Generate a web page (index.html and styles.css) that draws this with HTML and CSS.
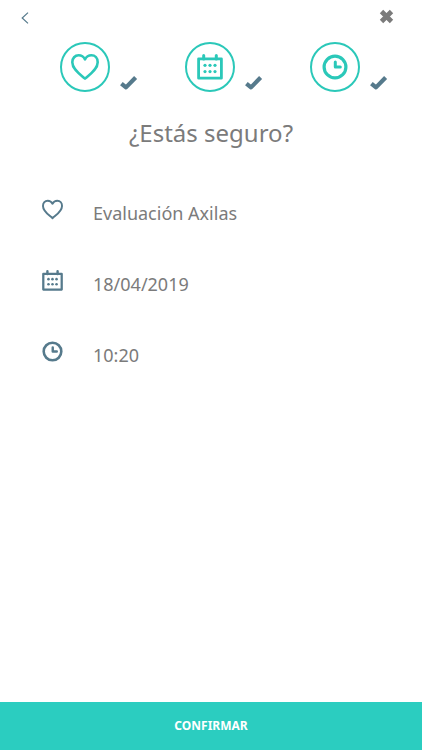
FILE: index.html
```html
<!DOCTYPE html>
<html lang="es">
<head>
<meta charset="utf-8">
<meta name="viewport" content="width=device-width, initial-scale=1">
<title>Confirmar cita</title>
<link rel="stylesheet" href="styles.css">
</head>
<body>
<svg class="symbols" aria-hidden="true">
  <symbol id="heart" viewBox="0 0 28 26">
    <path d="M14 24.600C9.500 20.500 1.300 15.500 1.300 8.200C1.300 4.200 4 1.300 7.600 1.300C10.500 1.300 12.700 2.800 14 5.300C15.300 2.800 17.500 1.300 20.400 1.300C24 1.300 26.700 4.200 26.700 8.200C26.700 15.500 18.500 20.500 14 24.600Z" fill="none" stroke="currentColor" stroke-width="2.600" stroke-linejoin="round"/>
  </symbol>
  <symbol id="calendar" viewBox="0 0 26 26">
    <path d="M1.600 4.800H24.400V24.200H1.600Z" fill="none" stroke="currentColor" stroke-width="2.800" stroke-linejoin="round"/>
    <path d="M6.700 1.500V5M19.300 1.500V5" fill="none" stroke="currentColor" stroke-width="3" stroke-linecap="round"/>
    <g fill="currentColor">
      <circle cx="8" cy="11.300" r="1.600"/><circle cx="13" cy="11.300" r="1.600"/><circle cx="18" cy="11.300" r="1.600"/>
      <circle cx="8" cy="17.600" r="1.600"/><circle cx="13" cy="17.600" r="1.600"/><circle cx="18" cy="17.600" r="1.600"/>
    </g>
  </symbol>
  <symbol id="clock" viewBox="0 0 26 26">
    <circle cx="13" cy="13" r="10.900" fill="none" stroke="currentColor" stroke-width="3.200"/>
    <path d="M13.300 8V13H18.300" fill="none" stroke="currentColor" stroke-width="3" stroke-linecap="round" stroke-linejoin="round"/>
  </symbol>
  <symbol id="check" viewBox="0 0 19 15">
    <path d="M2.400 8.600L7 12.400L16.600 2.500" fill="none" stroke="currentColor" stroke-width="4.200" stroke-linejoin="round"/>
  </symbol>
</svg>

<header class="topbar">
  <button class="icon-button" type="button" aria-label="Volver">
    <svg class="back-icon" viewBox="0 0 8 12"><path d="M7 .6L1.200 6L7 11.400" fill="none" stroke="currentColor" stroke-width="1.200"/></svg>
  </button>
  <button class="icon-button close" type="button" aria-label="Cerrar">
    <svg class="close-icon" viewBox="0 0 15 15"><path d="M2.500 2.500L12.500 12.500M12.500 2.500L2.500 12.500" fill="none" stroke="currentColor" stroke-width="4.800"/></svg>
  </button>
</header>

<main class="content">
  <ol class="steps">
    <li class="step">
      <span class="step-circle"><svg class="step-icon heart"><use href="#heart"/></svg></span>
      <svg class="check"><use href="#check"/></svg>
    </li>
    <li class="step">
      <span class="step-circle"><svg class="step-icon"><use href="#calendar"/></svg></span>
      <svg class="check"><use href="#check"/></svg>
    </li>
    <li class="step">
      <span class="step-circle"><svg class="step-icon"><use href="#clock"/></svg></span>
      <svg class="check"><use href="#check"/></svg>
    </li>
  </ol>

  <h1 class="title">¿Estás seguro?</h1>

  <ul class="details">
    <li class="detail"><svg class="detail-icon"><use href="#heart"/></svg><span>Evaluación Axilas</span></li>
    <li class="detail"><svg class="detail-icon"><use href="#calendar"/></svg><span>18/04/2019</span></li>
    <li class="detail"><svg class="detail-icon"><use href="#clock"/></svg><span>10:20</span></li>
  </ul>
</main>

<button class="confirm" type="button">CONFIRMAR</button>
</body>
</html>
```
FILE: styles.css
```css
* {
  box-sizing: border-box;
}

body {
  display: flex;
  flex-direction: column;
  min-height: 100vh;
  margin: 0;
  background: #fff;
  color: #7b7b7b;
  font-family: "Noto Sans", sans-serif;
}

svg {
  display: block;
}

.symbols {
  position: absolute;
  width: 0;
  height: 0;
}

.topbar {
  display: flex;
  justify-content: space-between;
  height: 42px;
  padding: 0 20px 0 12px;
}

.icon-button {
  display: flex;
  align-items: center;
  justify-content: center;
  width: 26px;
  height: 36px;
  padding: 0;
  border: 0;
  background: none;
  color: #567a8c;
  cursor: pointer;
}

.close {
  width: 32px;
  height: 32px;
  color: #7b7b7b;
}

.back-icon {
  width: 8px;
  height: 12px;
}

.close-icon {
  width: 15px;
  height: 15px;
}

.content {
  flex: 1;
}

.steps,
.details {
  margin: 0;
  padding: 0;
  list-style: none;
}

.steps {
  display: grid;
  grid-template-columns: repeat(3, 1fr);
  padding: 0 25px 0 22px;
}

.step {
  display: grid;
  grid-template-columns: 1fr 50px 1fr;
}

.step-circle {
  display: flex;
  grid-column: 2;
  align-items: center;
  justify-content: center;
  height: 50px;
  border: 2px solid #2bc8b9;
  border-radius: 50%;
  color: #2bc8b9;
}

.step-icon {
  width: 26px;
  height: 26px;
}

.step-icon.heart {
  width: 28px;
}

.check {
  align-self: end;
  width: 19px;
  height: 15px;
  margin: 0 0 2px 9px;
  color: #567a8c;
}

.title {
  margin: 24px 0 45px;
  font-size: 24px;
  font-weight: 400;
  line-height: 34px;
  text-align: center;
}

.details {
  display: grid;
  gap: 35px;
  padding: 0 42px;
}

.detail {
  display: grid;
  grid-template-columns: 21px 1fr;
  gap: 30px;
  font-size: 18px;
  line-height: 36px;
}

.detail-icon {
  width: 21px;
  height: 21px;
  margin-top: 4px;
  color: #567a8c;
}

.confirm {
  height: 48px;
  border: 0;
  background: #2bcdc0;
  color: #fff;
  font: bold 12px/16px "Noto Sans", sans-serif;
  cursor: pointer;
}
```
